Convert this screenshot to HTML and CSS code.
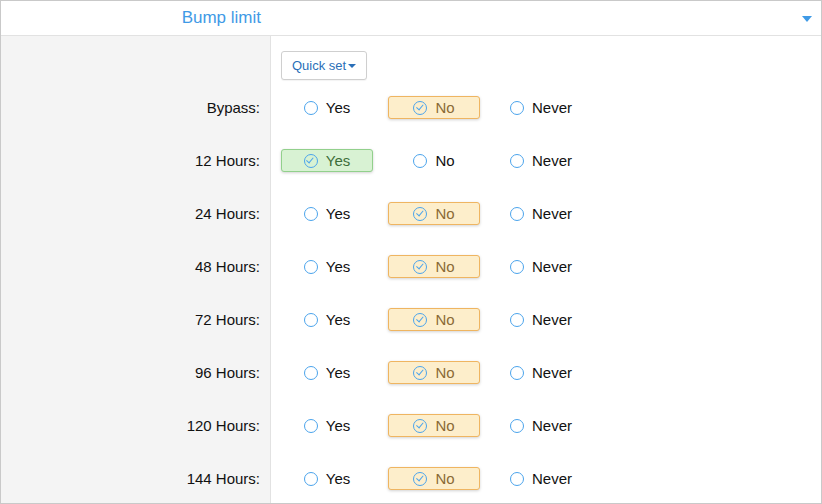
FILE: index.html
```html
<!DOCTYPE html>
<html lang="en">
<head>
    <meta charset="UTF-8">
    <title>Bump limit</title>
    <link rel="stylesheet" href="styles.css">
</head>
<body>
    <div class="panel">
        <div class="panel-head">
            <div class="panel-title">Bump limit</div>
            <span class="head-caret"></span>
        </div>

        <div class="row row-quick">
            <div class="label"></div>
            <div class="field">
                <button class="quick-button">Quick set<span class="btn-caret"></span></button>
            </div>
        </div>

        <div class="row">
            <div class="label">Bypass:</div>
            <div class="field">
                <span class="opt"><i class="radio"></i>Yes</span>
                <span class="opt opt-no"><i class="radio checked"></i>No</span>
                <span class="opt"><i class="radio"></i>Never</span>
            </div>
        </div>

        <div class="row">
            <div class="label">12 Hours:</div>
            <div class="field">
                <span class="opt opt-yes"><i class="radio checked"></i>Yes</span>
                <span class="opt"><i class="radio"></i>No</span>
                <span class="opt"><i class="radio"></i>Never</span>
            </div>
        </div>

        <div class="row">
            <div class="label">24 Hours:</div>
            <div class="field">
                <span class="opt"><i class="radio"></i>Yes</span>
                <span class="opt opt-no"><i class="radio checked"></i>No</span>
                <span class="opt"><i class="radio"></i>Never</span>
            </div>
        </div>

        <div class="row">
            <div class="label">48 Hours:</div>
            <div class="field">
                <span class="opt"><i class="radio"></i>Yes</span>
                <span class="opt opt-no"><i class="radio checked"></i>No</span>
                <span class="opt"><i class="radio"></i>Never</span>
            </div>
        </div>

        <div class="row">
            <div class="label">72 Hours:</div>
            <div class="field">
                <span class="opt"><i class="radio"></i>Yes</span>
                <span class="opt opt-no"><i class="radio checked"></i>No</span>
                <span class="opt"><i class="radio"></i>Never</span>
            </div>
        </div>

        <div class="row">
            <div class="label">96 Hours:</div>
            <div class="field">
                <span class="opt"><i class="radio"></i>Yes</span>
                <span class="opt opt-no"><i class="radio checked"></i>No</span>
                <span class="opt"><i class="radio"></i>Never</span>
            </div>
        </div>

        <div class="row">
            <div class="label">120 Hours:</div>
            <div class="field">
                <span class="opt"><i class="radio"></i>Yes</span>
                <span class="opt opt-no"><i class="radio checked"></i>No</span>
                <span class="opt"><i class="radio"></i>Never</span>
            </div>
        </div>

        <div class="row">
            <div class="label">144 Hours:</div>
            <div class="field">
                <span class="opt"><i class="radio"></i>Yes</span>
                <span class="opt opt-no"><i class="radio checked"></i>No</span>
                <span class="opt"><i class="radio"></i>Never</span>
            </div>
        </div>
    </div>
</body>
</html>
```

FILE: styles.css
```css
body {
    margin: 0;
    font-family: 'Liberation Sans', Arial, sans-serif;
    color: #111;
}
.panel {
    height: 504px;
    box-sizing: border-box;
    border: 1px solid #c9c9c9;
    overflow: hidden;
    background: #fff;
}
.panel-head {
    height: 34px;
    display: flex;
    align-items: center;
    border-bottom: 1px solid #e2e2e2;
}
.panel-title {
    width: 270px;
    box-sizing: border-box;
    padding-right: 10px;
    text-align: right;
    font-size: 17px;
    color: #3f9ae6;
}
.head-caret {
    margin-left: auto;
    margin-right: 9px;
    margin-top: 1px;
    border-left: 5px solid transparent;
    border-right: 5px solid transparent;
    border-top: 6px solid #3f9ae6;
}
.row {
    display: flex;
    height: 53px;
}
.row-quick {
    height: 45px;
}
.label {
    width: 270px;
    flex: none;
    box-sizing: border-box;
    padding-right: 10px;
    background: #f4f4f4;
    border-right: 1px solid #e2e2e2;
    display: flex;
    align-items: center;
    justify-content: flex-end;
    font-size: 15px;
}
.field {
    display: flex;
    align-items: center;
    gap: 15px;
    padding-left: 10px;
}
.row-quick .field {
    align-items: flex-end;
    padding-bottom: 1px;
}
.quick-button {
    height: 29px;
    padding: 0 10px;
    border: 1px solid #cfcfcf;
    border-radius: 3px;
    background: #fff;
    color: #2a6fb8;
    font-family: inherit;
    font-size: 13px;
    display: flex;
    align-items: center;
    box-shadow: 0 1px 1px rgba(0, 0, 0, 0.05);
}
.btn-caret {
    margin-left: 2px;
    border-left: 4px solid transparent;
    border-right: 4px solid transparent;
    border-top: 4px solid #2a6fb8;
}
.opt {
    width: 92px;
    height: 23px;
    box-sizing: border-box;
    border: 1px solid transparent;
    border-radius: 3px;
    display: flex;
    align-items: center;
    justify-content: center;
    gap: 8px;
    font-size: 15px;
}
.opt-no {
    background: #fdeecb;
    border-color: #efb561;
    color: #8a6a35;
    box-shadow: 0 1px 3px rgba(0, 0, 0, 0.18);
}
.opt-yes {
    background: #d8f2d3;
    border-color: #92d08c;
    color: #3d6e3a;
    box-shadow: 0 1px 3px rgba(0, 0, 0, 0.18);
}
.radio {
    width: 14px;
    height: 14px;
    box-sizing: border-box;
    border: 1.5px solid #4ba4ec;
    border-radius: 50%;
    position: relative;
}
.radio.checked::after {
    content: "";
    position: absolute;
    left: 3.5px;
    top: 1.5px;
    width: 3px;
    height: 5.5px;
    border-right: 1.5px solid #4ba4ec;
    border-bottom: 1.5px solid #4ba4ec;
    transform: rotate(40deg);
}
```
